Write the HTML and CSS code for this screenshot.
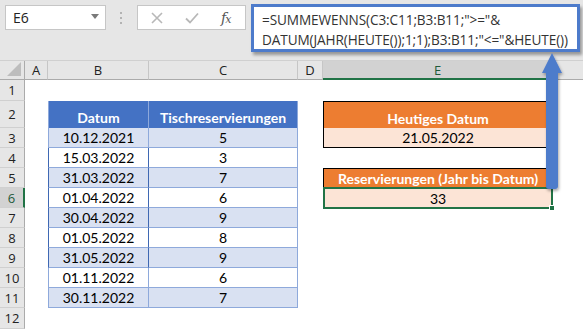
FILE: index.html
```html
<!DOCTYPE html>
<html>
<head>
<meta charset="utf-8">
<link rel="stylesheet" href="styles.css">
</head>
<body>
<div class="app">
  <div class="toolbar">
    <div class="namebox">
      <span class="ref">E6</span>
      <svg class="caret" width="8" height="5" viewBox="0 0 8 5"><path d="M0 0H8L4 5Z" fill="#7a7a7a"/></svg>
    </div>
    <div class="grip">
      <svg width="3" height="12" viewBox="0 0 3 12"><rect x="0" y="0" width="2" height="2" fill="#b3b3b3"/><rect x="0" y="5" width="2" height="2" fill="#b3b3b3"/><rect x="0" y="10" width="2" height="2" fill="#b3b3b3"/></svg>
    </div>
    <div class="fxbox">
      <svg class="ic" width="12" height="12" viewBox="0 0 12 12"><path d="M1 1L11 11M11 1L1 11" stroke="#b8b8b8" stroke-width="1.6"/></svg>
      <svg class="ic" width="14" height="12" viewBox="0 0 14 12"><path d="M1 6.5L5 10.5L13 1.5" stroke="#b8b8b8" stroke-width="1.8" fill="none"/></svg>
      <span class="fx">f<span class="x">x</span></span>
    </div>
    <div class="formula">
      <div>=SUMMEWENNS(C3:C11;B3:B11;"&gt;="&amp;</div>
      <div>DATUM(JAHR(HEUTE());1;1);B3:B11;"&lt;="&amp;HEUTE())</div>
    </div>
  </div>
  <div class="sheet">
    <div class="corner"><svg width="14" height="14" viewBox="0 0 14 14"><path d="M14 0V14H0Z" fill="#bdbdbd"/></svg></div>
    <div class="ch">A</div>
    <div class="ch">B</div>
    <div class="ch">C</div>
    <div class="ch">D</div>
    <div class="ch sel">E</div>
    <div class="ch last"></div>

    <div class="rh">1</div>
    <div class="c"></div><div class="c"></div><div class="c"></div><div class="c"></div><div class="c"></div><div class="c"></div>

    <div class="rh">2</div>
    <div class="c"></div>
    <div class="th thb">Datum</div>
    <div class="th thc">Tischreservierungen</div>
    <div class="c"></div>
    <div class="oh top">Heutiges Datum</div>
    <div class="c"></div>

    <div class="rh">3</div>
    <div class="c"></div>
    <div class="td b band">10.12.2021</div>
    <div class="td cc band">5</div>
    <div class="c"></div>
    <div class="ov bottom">21.05.2022</div>
    <div class="c"></div>

    <div class="rh">4</div>
    <div class="c"></div>
    <div class="td b dk">15.03.2022</div>
    <div class="td cc">3</div>
    <div class="c"></div><div class="c"></div><div class="c"></div>

    <div class="rh">5</div>
    <div class="c"></div>
    <div class="td b dk band">31.03.2022</div>
    <div class="td cc band">7</div>
    <div class="c"></div>
    <div class="oh top">Reservierungen (Jahr bis Datum)</div>
    <div class="c"></div>

    <div class="rh rsel">6</div>
    <div class="c"></div>
    <div class="td b dk">01.04.2022</div>
    <div class="td cc">6</div>
    <div class="c"></div>
    <div class="ov active">33<span class="handle"></span></div>
    <div class="c"></div>

    <div class="rh">7</div>
    <div class="c"></div>
    <div class="td b dk band">30.04.2022</div>
    <div class="td cc band">9</div>
    <div class="c"></div><div class="c"></div><div class="c"></div>

    <div class="rh">8</div>
    <div class="c"></div>
    <div class="td b dk">01.05.2022</div>
    <div class="td cc">8</div>
    <div class="c"></div><div class="c"></div><div class="c"></div>

    <div class="rh">9</div>
    <div class="c"></div>
    <div class="td b dk band">31.05.2022</div>
    <div class="td cc band">9</div>
    <div class="c"></div><div class="c"></div><div class="c"></div>

    <div class="rh">10</div>
    <div class="c"></div>
    <div class="td b">01.11.2022</div>
    <div class="td cc">6</div>
    <div class="c"></div><div class="c"></div><div class="c"></div>

    <div class="rh">11</div>
    <div class="c"></div>
    <div class="td b band">30.11.2022</div>
    <div class="td cc band">7</div>
    <div class="c"></div><div class="c"></div><div class="c"></div>

    <div class="rh">12</div>
    <div class="c"></div><div class="c"></div><div class="c"></div><div class="c"></div><div class="c"></div><div class="c"></div>
  </div>
  <svg class="arrow" width="30" height="150" viewBox="0 0 30 150">
    <defs>
      <filter id="sh" x="-50%" y="-10%" width="200%" height="130%">
        <feDropShadow dx="1" dy="2" stdDeviation="1.5" flood-color="#000" flood-opacity="0.35"/>
      </filter>
    </defs>
    <path d="M10 22H6L16 2L26 22H22V135Q22 138 19 138H13Q10 138 10 135Z" fill="#4d7bcb" filter="url(#sh)"/>
  </svg>
</div>
</body>
</html>
```
FILE: styles.css
```css
* { box-sizing: border-box; }
html, body { margin: 0; padding: 0; }
body { width: 583px; height: 329px; overflow: hidden; background: #fff; }
.app { position: relative; width: 583px; height: 329px; }

.toolbar {
  height: 61px;
  background: #e6e6e6;
  display: flex;
  align-items: flex-start;
  padding: 5px 0 0 5px;
  border-bottom: 1px solid #d0d0d0;
}
.namebox {
  width: 101px; height: 25px;
  background: #fff;
  border: 1px solid #c6c6c6;
  display: flex; align-items: center; justify-content: space-between;
  padding: 0 6px 0 7px;
  font-family: "Open Sans", sans-serif; font-size: 14px; color: #222;
}
.caret { margin-top: -3px; }
.grip { width: 31px; height: 25px; display: flex; align-items: center; justify-content: center; }
.fxbox {
  width: 109px; height: 25px;
  background: #fff;
  border: 1px solid #c6c6c6;
  display: flex; align-items: center;
  padding-left: 13px; gap: 22px;
}
.fx { font-family: "DejaVu Serif", "Liberation Serif", serif; font-style: italic; font-size: 14px; color: #555; letter-spacing: -1px; }
.fx .x { font-size: 11px; }
.formula {
  margin-left: 5px;
  margin-top: -1px;
  width: 329px; height: 48px;
  background: #fff;
  border: 3px solid #4d7bcb;
  box-shadow: 2px 3px 3px rgba(0,0,0,0.35);
  padding: 3px 0 0 8px;
  font-family: "Open Sans", sans-serif; font-size: 13.6px; letter-spacing: -0.1px; line-height: 20px; color: #333;
  white-space: nowrap;
  position: relative; z-index: 2;
}

.sheet {
  display: grid;
  grid-template-columns: 25px 23px 101px 149px 25px 230px 1fr;
  grid-template-rows: 19px 21px 27px repeat(9, 20px) 21px;
  font-family: "Lato", sans-serif;
}
.corner { background: #e6e6e6; border-right: 1px solid #ababab; border-bottom: 1px solid #ababab; display: flex; align-items: flex-end; justify-content: flex-end; padding: 0 3px 3px 0; }
.ch {
  background: #e6e6e6;
  border-right: 1px solid #c6c6c6;
  border-bottom: 1px solid #ababab;
  display: flex; align-items: center; justify-content: center;
  font-family: "Open Sans", sans-serif; font-size: 13px; color: #222;
}
.ch.sel { background: #d2d2d2; border-bottom: 2px solid #217346; color: #1e5b3a; }
.ch.last { border-right: none; }
.rh {
  background: #e6e6e6;
  border-right: 1px solid #ababab;
  border-bottom: 1px solid #d0d0d0;
  display: flex; align-items: center; justify-content: center;
  font-family: "Open Sans", sans-serif; font-size: 13px; color: #222;
}
.rh.rsel { background: #d2d2d2; border-right: 2px solid #217346; color: #1e5b3a; }
.c { background: #fff; }

.th {
  background: #4472c4; color: #fff; font-weight: bold; font-size: 14px;
  display: flex; align-items: flex-end; justify-content: center; padding-bottom: 2px;
  border-right: 1px solid #8ea9db;
}
.thb { border-left: 1px solid #8ea9db; }
.td {
  display: flex; align-items: center; justify-content: center;
  font-size: 14px; color: #000; background: #fff;
  border-bottom: 1px solid #8ea9db;
  border-right: 1px solid #8ea9db;
}
.td.b { border-left: 1px solid #8ea9db; }
.td.b.dk { border-left-color: #3f68b3; border-right-color: #3f68b3; }
.td.band { background: #d9e1f2; }

.oh {
  background: #ed7d31; color: #fff; font-weight: bold; font-size: 14px;
  display: flex; align-items: flex-end; justify-content: center; padding-bottom: 1px;
  border: 1px solid #000; border-bottom: none;
}
.ov {
  background: #fce4d6; color: #000; font-size: 14px;
  display: flex; align-items: center; justify-content: center;
  border: 1px solid #000; border-top: none;
}
.ov.active { border: 2px solid #217346; position: relative; margin-top: -1px; margin-bottom: -1px; }
.handle { position: absolute; right: -4px; bottom: -4px; width: 6px; height: 6px; background: #217346; border: 1px solid #fff; }

.arrow { position: absolute; left: 536px; top: 51px; z-index: 3; }
```
